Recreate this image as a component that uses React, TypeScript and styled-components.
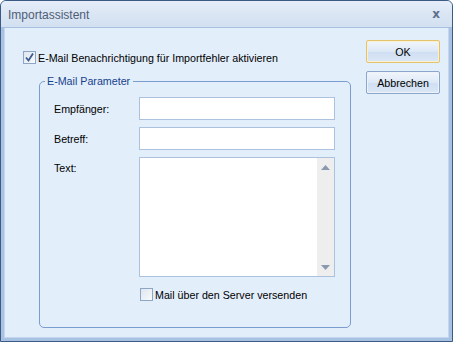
import React from 'react';
import styled, { createGlobalStyle } from 'styled-components';

const Global = createGlobalStyle`
  html, body {
    margin: 0;
    padding: 0;
    background: #ffffff;
  }
  * {
    box-sizing: border-box;
  }
`;

const Window = styled.div`
  width: 453px;
  height: 342px;
  display: flex;
  flex-direction: column;
  border: 1px solid #3b5b85;
  border-radius: 6px 6px 0 0;
  background: #a9c1e2;
  font-family: Tahoma, "Liberation Sans", Arial, sans-serif;
  font-size: 10.7px;
  overflow: hidden;
`;

const TitleBar = styled.div`
  height: 27px;
  flex: none;
  display: flex;
  align-items: center;
  justify-content: space-between;
  padding: 0 12px 0 7px;
  background: linear-gradient(#e5edf8, #dbe6f4 50%, #d2e0f1);
  border-bottom: 1px solid #a8c0e0;
`;

const Title = styled.span`
  color: #4e5d76;
  font-size: 12px;
  padding-top: 2px;
`;

const Close = styled.span`
  color: #5d6f8b;
  font-size: 12px;
  font-weight: bold;
  font-family: "DejaVu Sans", sans-serif;
`;

const Frame = styled.div`
  flex: 1;
  display: flex;
  padding: 0 3px 3px 3px;
`;

const Body = styled.div`
  flex: 1;
  display: flex;
  justify-content: space-between;
  background: #e3eefb;
  padding: 11px 8px 0 18px;
  border: 1px solid #c4d6ee;
  border-top: none;
`;

const MainColumn = styled.div`
  display: flex;
  flex-direction: column;
  width: 328px;
  padding-top: 12px;
`;

const CheckRow = styled.label`
  display: flex;
  align-items: center;
  gap: 2px;
  color: #000;
`;

const Box = styled.span<{ $checked?: boolean }>`
  width: 13px;
  height: 13px;
  flex: none;
  border: 1px solid #8ea6c6;
  background: linear-gradient(135deg, #dfe6ee, #f8fafc);
  display: flex;
  align-items: center;
  justify-content: center;
`;

const Group = styled.fieldset`
  margin: 11px 0 0 16px;
  padding: 10px 14px 0 14px;
  height: 253px;
  border: 1px solid #7a9cce;
  border-radius: 5px;
`;

const Legend = styled.legend`
  color: #15428b;
  padding: 0 3px 0 2px;
  margin-left: -9px;
`;

const FieldRow = styled.div<{ $tall?: boolean }>`
  display: flex;
  align-items: ${p => (p.$tall ? 'flex-start' : 'center')};
  margin: ${p => (p.$tall ? '1px 0 0' : '0 0 7px')};
`;

const Label = styled.span<{ $tall?: boolean }>`
  width: 85px;
  color: #000;
  padding-top: ${p => (p.$tall ? '5px' : '0')};
`;

const Input = styled.div`
  width: 196px;
  height: 23px;
  border: 1px solid #abc1de;
  background: #ffffff;
`;

const TextArea = styled.div`
  width: 196px;
  height: 120px;
  border: 1px solid #abc1de;
  background: #ffffff;
  display: flex;
  justify-content: flex-end;
`;

const ScrollBar = styled.div`
  width: 17px;
  background: #eeeeee;
  display: flex;
  flex-direction: column;
  justify-content: space-between;
  align-items: center;
  padding: 7px 0 6px;
`;

const ServerRow = styled(CheckRow)`
  margin: 11px 0 0 86px;
`;

const ButtonColumn = styled.div`
  display: flex;
  flex-direction: column;
  gap: 8px;
  padding-top: 1px;
`;

const Button = styled.button<{ $default?: boolean }>`
  width: 74px;
  height: 23px;
  font: inherit;
  color: #000;
  border-radius: 2px;
  border: 1px solid ${p => (p.$default ? '#e3c36e' : '#8aa6cb')};
  background: linear-gradient(#f2f6fc, #dde8f6 50%, #cfdef2 51%, #dbe7f6);
  box-shadow: inset 0 0 0 1px ${p => (p.$default ? '#f8f0d0' : '#eef3fa')};
  padding: 0;
`;

const Tick = () => (
  <svg width="11" height="11" viewBox="0 0 11 11">
    <path d="M2 5.5 L4.5 8.5 L9 1.5" fill="none" stroke="#3d5a8c" strokeWidth="1.8" />
  </svg>
);

const Arrow = ({ up }: { up?: boolean }) => (
  <svg width="9" height="5" viewBox="0 0 9 5">
    <path d={up ? 'M0 5 L4.5 0 L9 5 Z' : 'M0 0 L4.5 5 L9 0 Z'} fill="#8b99b0" />
  </svg>
);

export default function App() {
  return (
    <>
      <Global />
      <Window>
        <TitleBar>
          <Title>Importassistent</Title>
          <Close>x</Close>
        </TitleBar>
        <Frame>
          <Body>
            <MainColumn>
              <CheckRow>
                <Box $checked>
                  <Tick />
                </Box>
                E-Mail Benachrichtigung für Importfehler aktivieren
              </CheckRow>
              <Group>
                <Legend>E-Mail Parameter</Legend>
                <FieldRow>
                  <Label>Empfänger:</Label>
                  <Input />
                </FieldRow>
                <FieldRow>
                  <Label>Betreff:</Label>
                  <Input />
                </FieldRow>
                <FieldRow $tall>
                  <Label $tall>Text:</Label>
                  <TextArea>
                    <ScrollBar>
                      <Arrow up />
                      <Arrow />
                    </ScrollBar>
                  </TextArea>
                </FieldRow>
                <ServerRow>
                  <Box />
                  Mail über den Server versenden
                </ServerRow>
              </Group>
            </MainColumn>
            <ButtonColumn>
              <Button $default>OK</Button>
              <Button>Abbrechen</Button>
            </ButtonColumn>
          </Body>
        </Frame>
      </Window>
    </>
  );
}
